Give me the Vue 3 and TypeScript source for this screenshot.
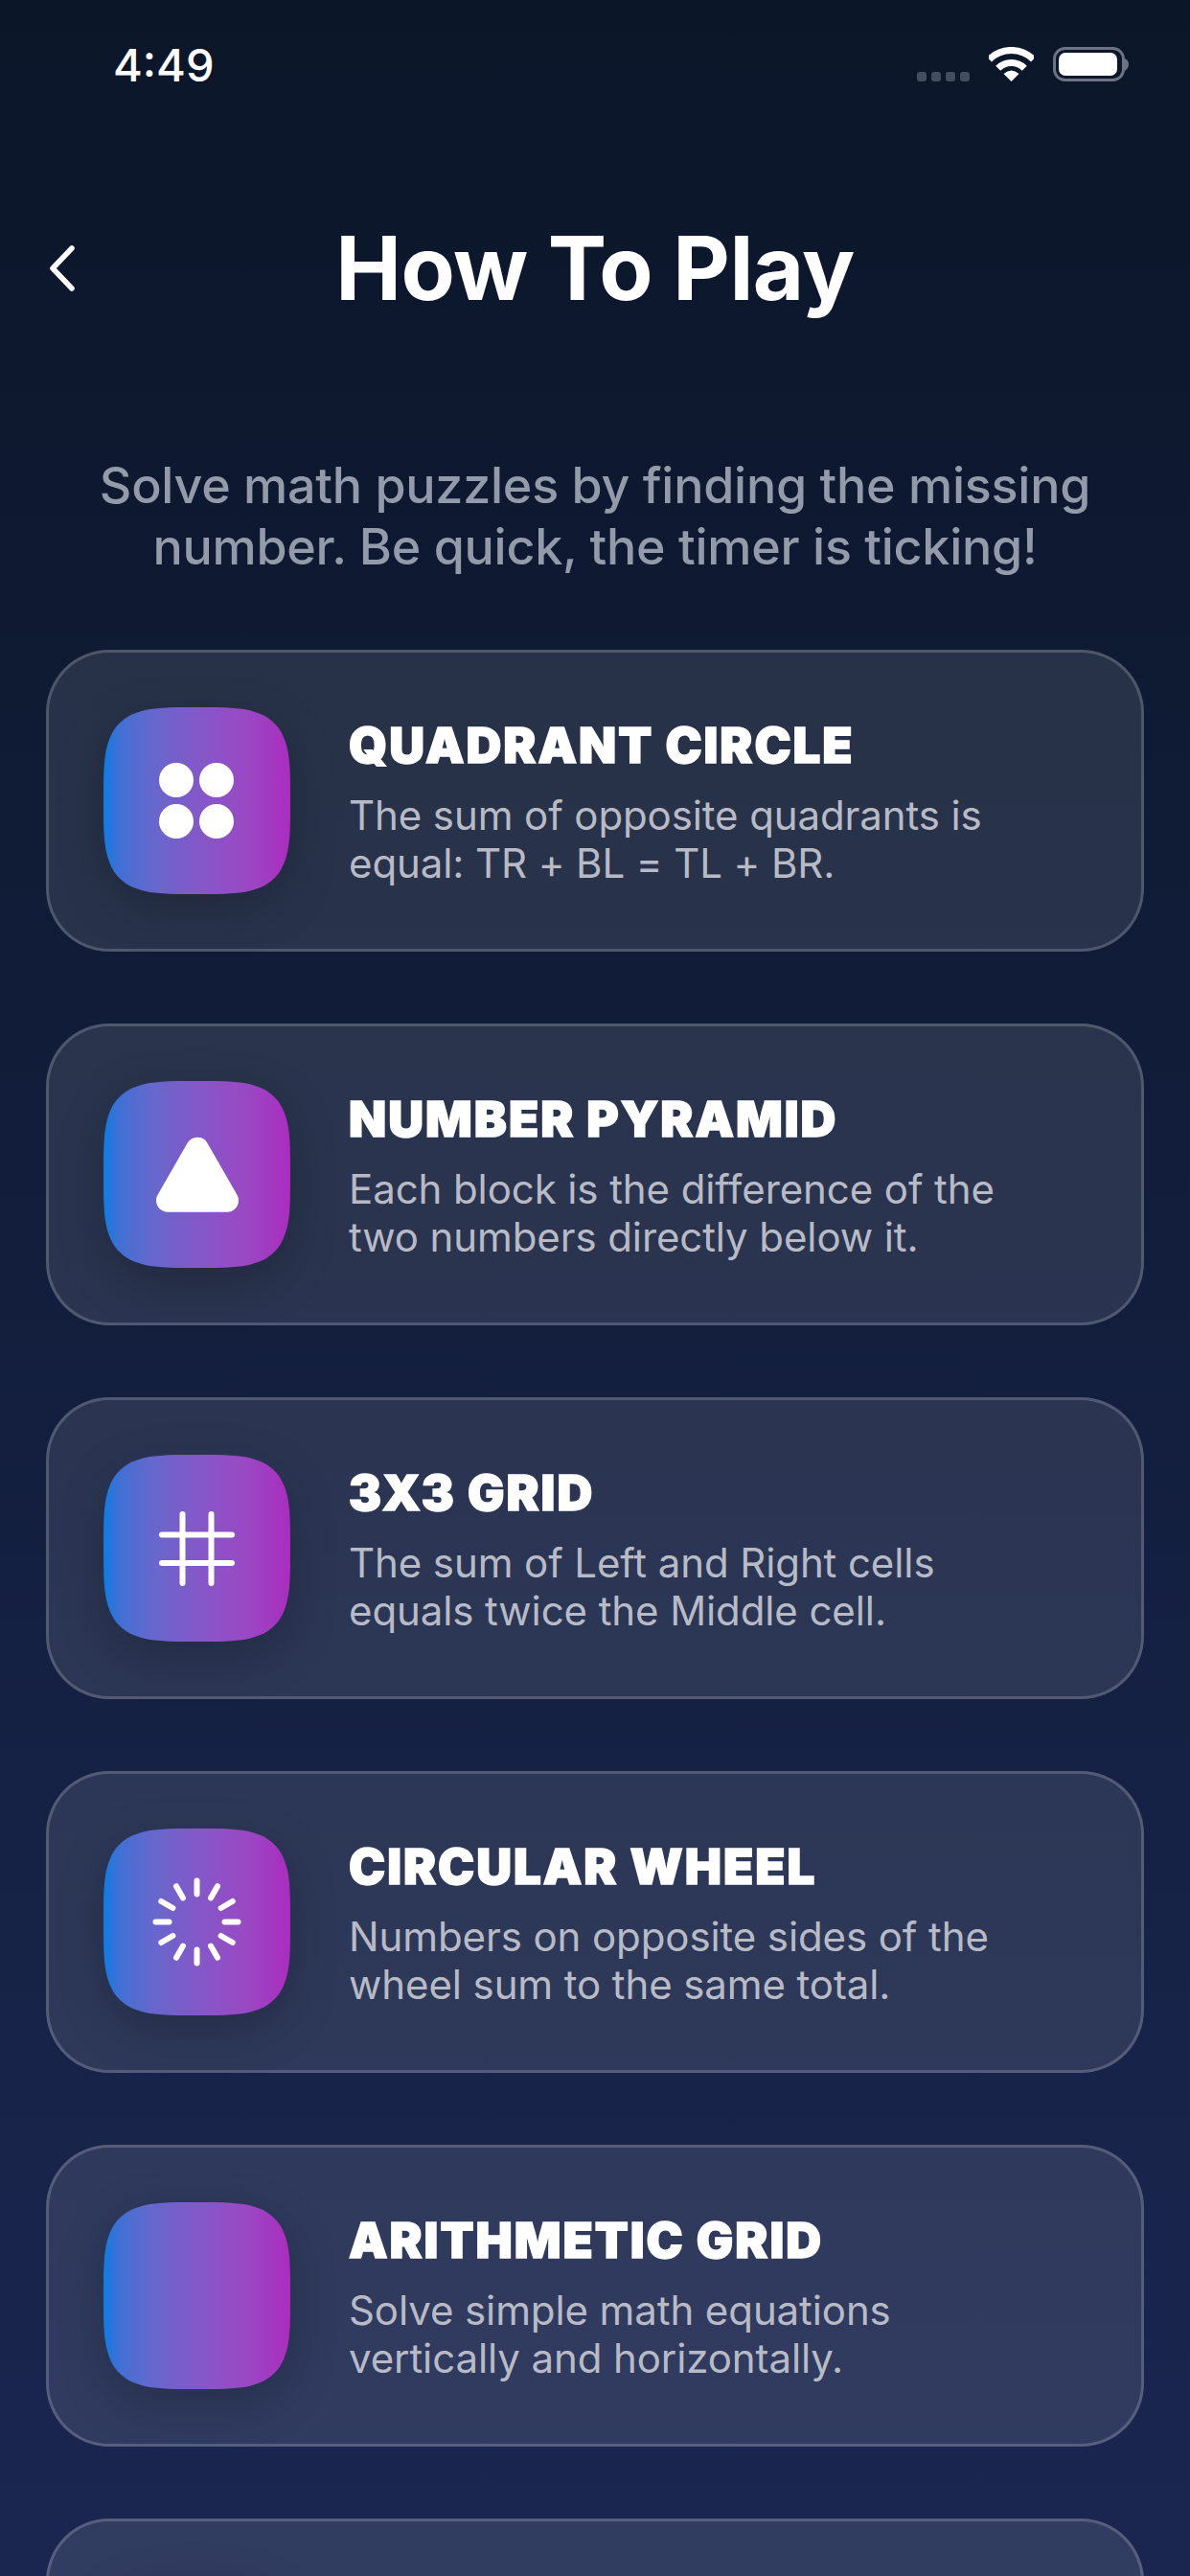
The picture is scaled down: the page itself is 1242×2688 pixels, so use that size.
<script setup lang="ts">
interface Step {
  kind: 'dots' | 'triangle' | 'grid' | 'wheel' | 'none'
  title: string
  lines: string
}

const steps: Step[] = [
  { kind: 'dots', title: 'QUADRANT CIRCLE', lines: 'The sum of opposite quadrants is equal: TR + BL = TL + BR.' },
  { kind: 'triangle', title: 'NUMBER PYRAMID', lines: 'Each block is the difference of the two numbers directly below it.' },
  { kind: 'grid', title: '3X3 GRID', lines: 'The sum of Left and Right cells equals twice the Middle cell.' },
  { kind: 'wheel', title: 'CIRCULAR WHEEL', lines: 'Numbers on opposite sides of the wheel sum to the same total.' },
  { kind: 'none', title: 'ARITHMETIC GRID', lines: 'Solve simple math equations vertically and horizontally.' },
  { kind: 'none', title: '', lines: '' },
]

// superellipse outline for the app-icon tile
function squircle(size: number, n: number): string {
  const r = size / 2
  const pts: string[] = []
  for (let i = 0; i < 120; i++) {
    const a = (i / 120) * Math.PI * 2
    const c = Math.cos(a)
    const s = Math.sin(a)
    const x = r + r * Math.sign(c) * Math.pow(Math.abs(c), 2 / n)
    const y = r + r * Math.sign(s) * Math.pow(Math.abs(s), 2 / n)
    pts.push(`${x.toFixed(2)} ${y.toFixed(2)}`)
  }
  return `M${pts.join('L')}Z`
}

const tile = squircle(195, 3.7)

const ticks = Array.from({ length: 12 }, (_, i) => {
  const a = (i * Math.PI) / 6
  return {
    x1: 97.5 + 29 * Math.cos(a),
    y1: 97.5 + 29 * Math.sin(a),
    x2: 97.5 + 43 * Math.cos(a),
    y2: 97.5 + 43 * Math.sin(a),
  }
})
</script>

<template>
  <div class="screen">
    <div class="status">
      <span class="time">4:49</span>
      <div class="status-right">
        <div class="signal"><i></i><i></i><i></i><i></i></div>
        <svg class="wifi" width="47" height="36" viewBox="0 0 47 36">
          <path d="M0.5 13 A32.5 32.5 0 0 1 46.5 13" fill="none" stroke="#fff" stroke-width="7" />
          <path d="M9.7 22.2 A19.5 19.5 0 0 1 37.3 22.2" fill="none" stroke="#fff" stroke-width="7" />
          <path d="M23.5 36 L15.5 28 Q23.5 21 31.5 28 Z" fill="#fff" />
        </svg>
        <svg class="battery" width="79" height="36" viewBox="0 0 79 36">
          <rect x="1.5" y="1.5" width="72" height="33" rx="11" fill="none" stroke="#6b7385" stroke-width="3" />
          <rect x="6" y="6" width="61" height="24" rx="7" fill="#fff" />
          <path d="M75 12 Q79 14 79 18 Q79 22 75 25 Z" fill="#6b7385" />
        </svg>
      </div>
    </div>

    <div class="header">
      <svg class="back" width="28" height="48" viewBox="0 0 28 48">
        <path d="M24 3 L4 24 L24 45" fill="none" stroke="#fff" stroke-width="5.5" stroke-linecap="round" stroke-linejoin="round" />
      </svg>
      <h1>How To Play</h1>
    </div>

    <p class="intro">Solve math puzzles by finding the missing<br />number. Be quick, the timer is ticking!</p>

    <div class="cards">
      <div v-for="(step, idx) in steps" :key="idx" class="card">
        <svg class="tile" width="195" height="195" viewBox="0 0 195 195">
          <defs>
            <linearGradient :id="`tile-${idx}`" x1="0" y1="0" x2="1" y2="0">
              <stop offset="0" stop-color="#0c7ee2" />
              <stop offset="0.08" stop-color="#4070d5" />
              <stop offset="0.25" stop-color="#6468cd" />
              <stop offset="0.51" stop-color="#8458c8" />
              <stop offset="0.77" stop-color="#9a48c4" />
              <stop offset="1" stop-color="#ab2cbf" />
            </linearGradient>
          </defs>
          <path :d="tile" :fill="`url(#tile-${idx})`" />
          <g v-if="step.kind === 'dots'" fill="#fff">
            <circle cx="76" cy="76" r="18" />
            <circle cx="118" cy="76" r="18" />
            <circle cx="76" cy="119" r="18" />
            <circle cx="118" cy="119" r="18" />
          </g>
          <path
            v-else-if="step.kind === 'triangle'"
            d="M98 70.7 L67 124.7 L129 124.7 Z"
            fill="#fff"
            stroke="#fff"
            stroke-width="24"
            stroke-linejoin="round"
          />
          <g v-else-if="step.kind === 'grid'" stroke="#fff" stroke-width="6" stroke-linecap="round">
            <path d="M82.5 62 V134 M112.5 62 V134 M61 83.5 H134 M61 113 H134" fill="none" />
          </g>
          <g v-else-if="step.kind === 'wheel'" stroke="#fff" stroke-width="6" stroke-linecap="round">
            <line v-for="(t, i) in ticks" :key="i" :x1="t.x1" :y1="t.y1" :x2="t.x2" :y2="t.y2" />
          </g>
        </svg>
        <div class="copy">
          <h2>{{ step.title }}</h2>
          <p>{{ step.lines }}</p>
        </div>
      </div>
    </div>
  </div>
</template>

<style>
html,
body {
  margin: 0;
  background: #0c1729;
}
</style>

<style scoped>
.screen {
  width: 1242px;
  height: 2688px;
  overflow: hidden;
  background: linear-gradient(180deg, #0b1629 0%, #1a2650 100%);
  font-family: Inter, "Liberation Sans", sans-serif;
  color: #fff;
}
.status {
  height: 220px;
  box-sizing: border-box;
  padding: 40px 64px 0 118px;
  display: flex;
  justify-content: space-between;
  align-items: flex-start;
}
.time {
  font-size: 47px;
  font-weight: 500;
  line-height: 56px;
}
.status-right {
  display: flex;
  align-items: flex-end;
  padding-top: 9px;
}
.signal {
  display: flex;
  gap: 5px;
  margin-right: 20px;
}
.signal i {
  display: block;
  width: 10px;
  height: 10px;
  border-radius: 3px;
  background: #444d60;
}
.wifi {
  margin-right: 20px;
  display: block;
}
.battery {
  display: block;
}
.header {
  position: relative;
  height: 120px;
  display: flex;
  align-items: center;
  justify-content: center;
}
.back {
  position: absolute;
  left: 51px;
  top: 36px;
}
h1 {
  margin: 0;
  font-size: 92px;
  font-weight: 700;
  line-height: 120px;
  letter-spacing: -0.6px;
}
.intro {
  margin: 135px 0 75px;
  text-align: center;
  font-size: 52px;
  font-weight: 500;
  line-height: 64px;
  letter-spacing: -0.25px;
  color: #939aa9;
}
.cards {
  display: flex;
  flex-direction: column;
  gap: 75px;
  padding: 0 48px;
}
.card {
  box-sizing: border-box;
  height: 315px;
  flex-shrink: 0;
  padding: 0 57px;
  display: flex;
  align-items: center;
  gap: 61px;
  border: 3px solid rgba(255, 255, 255, 0.18);
  border-radius: 66px;
  background: rgba(255, 255, 255, 0.1);
}
.tile {
  flex-shrink: 0;
  filter: drop-shadow(0 16px 24px rgba(0, 0, 0, 0.2));
}
.copy {
  min-width: 0;
  padding-top: 2px;
}
h2 {
  margin: 0 0 17px;
  font-size: 51px;
  font-weight: 900;
  line-height: 62px;
  letter-spacing: 2px;
  -webkit-text-stroke: 1.5px #fff;
}
.copy p {
  margin: 0;
  width: 700px;
  font-size: 42px;
  line-height: 50px;
  letter-spacing: -0.1px;
  color: #b8bbc6;
}
</style>
